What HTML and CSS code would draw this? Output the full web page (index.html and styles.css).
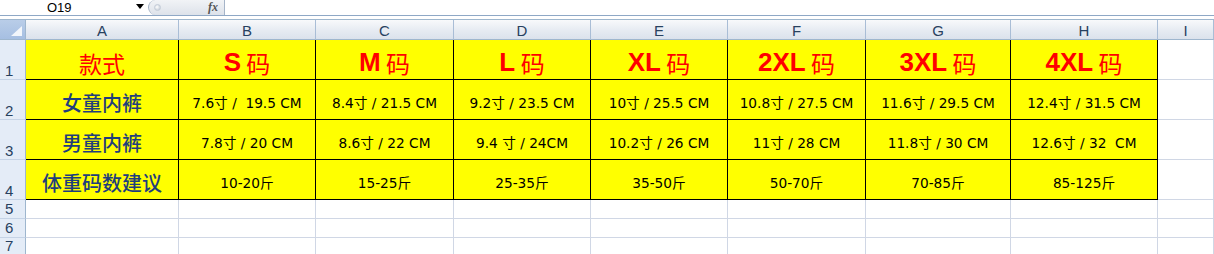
FILE: index.html
```html
<!DOCTYPE html>
<html>
<head>
<meta charset="utf-8">
<link rel="stylesheet" href="styles.css">
</head>
<body>
<div class="fbar">
  <div class="namebox">O19</div>
  <div class="dd"><svg width="8" height="5" viewBox="0 0 8 5"><path d="M0 0H8L4 5Z" fill="#000"/></svg></div>
  <div class="pill"><span class="knob"></span><span class="fx">fx</span></div>
  <div class="formula"></div>
</div>
<div class="gap"></div>
<div class="sheet">
  <div class="corner"><svg width="11" height="10" viewBox="0 0 11 10"><path d="M11 0V10H0Z" fill="#f2f6fb"/></svg></div>
  <div class="ch">A</div><div class="ch">B</div><div class="ch">C</div><div class="ch">D</div><div class="ch">E</div><div class="ch">F</div><div class="ch">G</div><div class="ch">H</div><div class="ch">I</div>

  <div class="rh">1</div>
  <div class="c y t1 kz">款式</div>
  <div class="c y t1"><b>S</b>&nbsp;码</div>
  <div class="c y t1"><b>M</b>&nbsp;码</div>
  <div class="c y t1"><b>L</b>&nbsp;码</div>
  <div class="c y t1"><b>XL</b>&nbsp;码</div>
  <div class="c y t1"><b>2XL</b>&nbsp;码</div>
  <div class="c y t1"><b>3XL</b>&nbsp;码</div>
  <div class="c y t1"><b>4XL</b>&nbsp;码</div>
  <div class="c w"></div>

  <div class="rh">2</div>
  <div class="c y lab">女童内裤</div>
  <div class="c y d">7.6寸 /&nbsp; 19.5 CM</div>
  <div class="c y d">8.4寸 / 21.5 CM</div>
  <div class="c y d">9.2寸 / 23.5 CM</div>
  <div class="c y d">10寸 / 25.5 CM</div>
  <div class="c y d">10.8寸 / 27.5 CM</div>
  <div class="c y d">11.6寸 / 29.5 CM</div>
  <div class="c y d">12.4寸 / 31.5 CM</div>
  <div class="c w"></div>

  <div class="rh">3</div>
  <div class="c y lab">男童内裤</div>
  <div class="c y d">7.8寸 / 20 CM</div>
  <div class="c y d">8.6寸 / 22 CM</div>
  <div class="c y d">9.4 寸 / 24CM</div>
  <div class="c y d">10.2寸 / 26 CM</div>
  <div class="c y d">11寸 / 28 CM</div>
  <div class="c y d">11.8寸 / 30 CM</div>
  <div class="c y d">12.6寸 / 32&nbsp; CM</div>
  <div class="c w"></div>

  <div class="rh">4</div>
  <div class="c y lab">体重码数建议</div>
  <div class="c y d">10-20斤</div>
  <div class="c y d">15-25斤</div>
  <div class="c y d">25-35斤</div>
  <div class="c y d">35-50斤</div>
  <div class="c y d">50-70斤</div>
  <div class="c y d">70-85斤</div>
  <div class="c y d">85-125斤</div>
  <div class="c w"></div>

  <div class="rh s">5</div>
  <div class="c w s"></div><div class="c w s"></div><div class="c w s"></div><div class="c w s"></div><div class="c w s"></div><div class="c w s"></div><div class="c w s"></div><div class="c w s"></div><div class="c w s"></div>
  <div class="rh s">6</div>
  <div class="c w s"></div><div class="c w s"></div><div class="c w s"></div><div class="c w s"></div><div class="c w s"></div><div class="c w s"></div><div class="c w s"></div><div class="c w s"></div><div class="c w s"></div>
  <div class="rh s">7</div>
  <div class="c w s"></div><div class="c w s"></div><div class="c w s"></div><div class="c w s"></div><div class="c w s"></div><div class="c w s"></div><div class="c w s"></div><div class="c w s"></div><div class="c w s"></div>
</div>
</body>
</html>
```
FILE: styles.css
```css
* { box-sizing: border-box; }
html, body { margin: 0; padding: 0; background: #fff; overflow: hidden; }
body { font-family: "Liberation Sans", "Noto Sans CJK SC", sans-serif; }

.fbar {
  height: 16px;
  display: flex;
  align-items: stretch;
  border-bottom: 1px solid #8fa8c6;
}
.namebox {
  width: 132px;
  padding-left: 47px;
  font-size: 13px;
  line-height: 15px;
  color: #000;
}
.dd { width: 16px; display: flex; align-items: center; justify-content: center; padding-bottom: 2px; }
.pill {
  width: 77px;
  display: flex;
  align-items: center;
  justify-content: space-between;
  padding: 0 6px 0 5px;
  border: 1px solid #a5b4c8;
  border-top: none;
  border-bottom: none;
  border-radius: 0 0 0 8px;
  border-top-left-radius: 8px;
  background: linear-gradient(#f1f3f6, #dde2ea);
}
.knob {
  width: 7px; height: 7px; border-radius: 50%;
  background: radial-gradient(circle at 40% 40%, #ffffff, #b9c2cf);
  border: 1px solid #c3ccd8;
}
.fx {
  font-family: "Liberation Serif", serif;
  font-style: italic;
  font-weight: bold;
  font-size: 12px;
  color: #555;
}
.formula { flex: 1; }
.gap { height: 3px; }

.sheet {
  display: grid;
  grid-template-columns: 26px 153px 137px 138px 137px 137px 138px 145px 147px 1fr;
  grid-template-rows: 20px 40px 40px 40px 40px 19px 19px 18px;
  border-top: 1px solid #9eb6ce;
}
.corner {
  background: linear-gradient(#b9cde8, #a6bfe2);
  border-right: 1px solid #9eb6ce;
  border-bottom: 1px solid #9eb6ce;
  display: flex; align-items: flex-end; justify-content: flex-end;
  padding: 0 3px 3px 0;
}
.ch {
  background: linear-gradient(#f8f9fb, #e6ebf2 55%, #dbe2ec);
  border-right: 1px solid #a9bdd6;
  border-bottom: 1px solid #9eb6ce;
  display: flex; align-items: center; justify-content: center;
  font-size: 15px;
  color: #27415f;
  padding-top: 1px;
}
.rh {
  background: #e4ecf7;
  border-right: 1px solid #9eb6ce;
  border-bottom: 1px solid #c5d3e6;
  font-size: 15px;
  color: #27415f;
  display: flex; align-items: flex-end;
  padding-left: 5px;
  padding-bottom: 0;
  line-height: 17px;
}
.rh.s { line-height: 18px; }
.c {
  border-right: 1px solid #d0d7e5;
  border-bottom: 1px solid #d0d7e5;
  display: flex; align-items: center; justify-content: center;
  white-space: nowrap;
}
.y {
  background: #ffff00;
  border-right: 1px solid #000;
  border-bottom: 1px solid #000;
}
.w { background: #fff; }

.t1 {
  color: #ff0000;
  font-family: "Noto Sans CJK SC", sans-serif;
  font-size: 24px;
  padding-top: 6px;
}
.t1 b {
  font-family: "Liberation Sans", "Noto Sans CJK SC", sans-serif;
  font-weight: bold;
  font-size: 26px;
}
.kz { font-size: 23px; }
.lab {
  color: #1f3e7c;
  font-family: "Noto Sans CJK SC", sans-serif;
  font-size: 20px;
  font-weight: 500;
  padding-top: 6px;
}
.d {
  font-family: "DejaVu Sans", "Noto Sans CJK SC", sans-serif;
  font-size: 13.7px;
  color: #000;
  padding-top: 4px;
}
```
